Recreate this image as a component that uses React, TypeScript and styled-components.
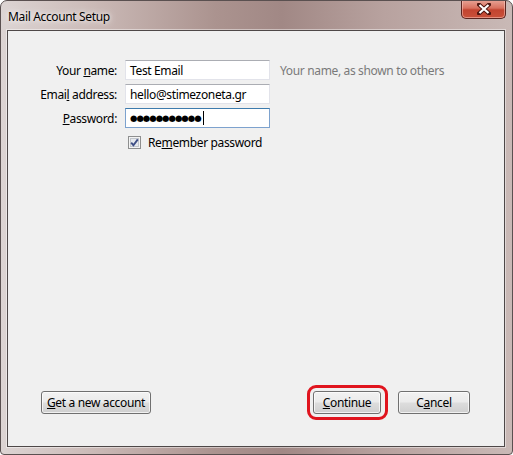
import styled, {createGlobalStyle} from "styled-components";

const GlobalStyle = createGlobalStyle`
  html, body {
    margin: 0;
    padding: 0;
    background: #ffffff;
  }
  body {
    font-family: "Noto Sans", "Open Sans", sans-serif;
    font-size: 12px;
    letter-spacing: -0.35px;
  }
`

const CheckMark = () => (
    <svg width="13" height="13" viewBox="0 0 13 13">
        <rect x="0.5" y="0.5" width="12" height="12" fill="#f4f4f4" stroke="#8e8f8f"/>
        <rect x="2.5" y="2.5" width="8" height="8" fill="#e6e9ee" stroke="#c2c6cc"/>
        <path d="M3.2 6.6 L5.4 9.2 L9.8 3.4" fill="none" stroke="#3f4f86" strokeWidth="1.9"/>
    </svg>
);

const CloseGlyph = () => (
    <svg width="14" height="12" viewBox="0 0 14 12">
        <path d="M2 1.5 L12 10.5 M12 1.5 L2 10.5" stroke="#4d1610" strokeWidth="4" strokeLinecap="square"/>
        <path d="M2.5 2 L11.5 10 M11.5 2 L2.5 10" stroke="#ffffff" strokeWidth="2.2"/>
    </svg>
);

const App = () => {
    return (
        <>
            <GlobalStyle/>
            <Window>
                <TitleBar>
                    <Title>Mail Account Setup</Title>
                    <CloseButton aria-label="Close"><CloseGlyph/></CloseButton>
                </TitleBar>
                <Client>
                    <FormGrid>
                        <Label>Your <u>n</u>ame:</Label>
                        <Field>Test Email</Field>
                        <Hint>Your name, as shown to others</Hint>

                        <Label>Emai<u>l</u> address:</Label>
                        <Field>hello@stimezoneta.gr</Field>
                        <span/>

                        <Label><u>P</u>assword:</Label>
                        <Field focused>
                            <Dots>●●●●●●●●●●●</Dots>
                            <Caret/>
                        </Field>
                        <span/>

                        <CheckRow>
                            <CheckMark/>
                            <span>Re<u>m</u>ember password</span>
                        </CheckRow>
                    </FormGrid>

                    <Footer>
                        <Button width={110}><u>G</u>et a new account</Button>
                        <Actions>
                            <Button width={68} highlighted><u>C</u>ontinue</Button>
                            <Button width={72}>C<u>a</u>ncel</Button>
                        </Actions>
                    </Footer>
                </Client>
            </Window>
        </>
    );
}

const Window = styled.div`
  width: 513px;
  height: 455px;
  box-sizing: border-box;
  display: flex;
  flex-direction: column;
  border: 1px solid #5a5050;
  border-radius: 7px 7px 4px 4px;
  background: linear-gradient(90deg, #dcd4d3 0%, #cbbab7 18%, #ab938f 42%, #a18885 55%, #b8a29f 75%, #c9b9b6 100%);
  overflow: hidden;
`

const TitleBar = styled.div`
  height: 29px;
  display: flex;
  justify-content: space-between;
  align-items: flex-start;
  padding-left: 7px;
`

const Title = styled.div`
  margin-top: 7px;
  font-size: 12px;
  color: #000;
  text-shadow: 0 0 8px rgba(255, 255, 255, 0.9), 0 0 4px rgba(255, 255, 255, 0.8);
`

const CloseButton = styled.div`
  width: 45px;
  height: 19px;
  margin-top: -1px;
  margin-right: 6px;
  box-sizing: border-box;
  display: flex;
  align-items: center;
  justify-content: center;
  border: 1px solid #5a2520;
  border-top: none;
  border-radius: 0 0 5px 5px;
  background: linear-gradient(180deg, #e8a597 0%, #d8715f 45%, #c24430 55%, #c9513a 100%);
  box-shadow: inset 0 0 0 1px rgba(255, 210, 200, 0.5);
`

const Client = styled.div`
  flex: 1;
  margin: 0 7px 7px 6px;
  display: flex;
  flex-direction: column;
  justify-content: space-between;
  border: 1px solid #4e4848;
  background: #f0f0f0;
  box-shadow: 0 0 0 1px rgba(255, 255, 255, 0.45);
`

const FormGrid = styled.div`
  display: grid;
  grid-template-columns: 109px 145px 1fr;
  column-gap: 8px;
  row-gap: 4px;
  align-items: center;
  padding-top: 29px;
`

const Label = styled.label`
  text-align: right;
  color: #000;
  white-space: nowrap;
`

const Field = styled.div<{ focused?: boolean }>`
  height: 20px;
  box-sizing: border-box;
  display: flex;
  align-items: center;
  padding: 0 4px;
  background: #fff;
  color: #000;
  white-space: nowrap;
  overflow: hidden;
  border: 1px solid ${p => p.focused ? "#7da2ce" : "#e2e3ea"};
  border-top-color: ${p => p.focused ? "#3d7bad" : "#abadb3"};
`

const Dots = styled.span`
  font-family: "DejaVu Sans", sans-serif;
  font-size: 8.5px;
  letter-spacing: -1px;
`

const Caret = styled.span`
  width: 1px;
  height: 14px;
  margin-left: 2px;
  background: #000;
`

const Hint = styled.span`
  margin-left: 2px;
  color: #7a7a7a;
  white-space: nowrap;
`

const CheckRow = styled.label`
  grid-column: 2 / 4;
  display: flex;
  align-items: center;
  gap: 7px;
  margin-top: 2px;
  padding-left: 3px;
  color: #000;
`

const Footer = styled.div`
  display: flex;
  justify-content: space-between;
  align-items: center;
  padding: 0 34px 32px 33px;
`

const Actions = styled.div`
  display: flex;
  gap: 17px;
`

const Button = styled.div<{ width: number; highlighted?: boolean }>`
  position: relative;
  width: ${p => p.width}px;
  height: 23px;
  box-sizing: border-box;
  display: flex;
  align-items: center;
  justify-content: center;
  border: 1px solid #707070;
  border-radius: 3px;
  color: #000;
  white-space: nowrap;
  background: linear-gradient(180deg, #f2f2f2 0%, #ebebeb 48%, #dddddd 52%, #cfcfcf 100%);
  box-shadow: inset 0 0 0 1px rgba(255, 255, 255, 0.7);

  ${p => p.highlighted && `
    &::after {
      content: "";
      position: absolute;
      inset: -7px -8px -7px -7px;
      border: 3.5px solid #e0141e;
      border-radius: 9px;
    }
  `}
`

export default App
